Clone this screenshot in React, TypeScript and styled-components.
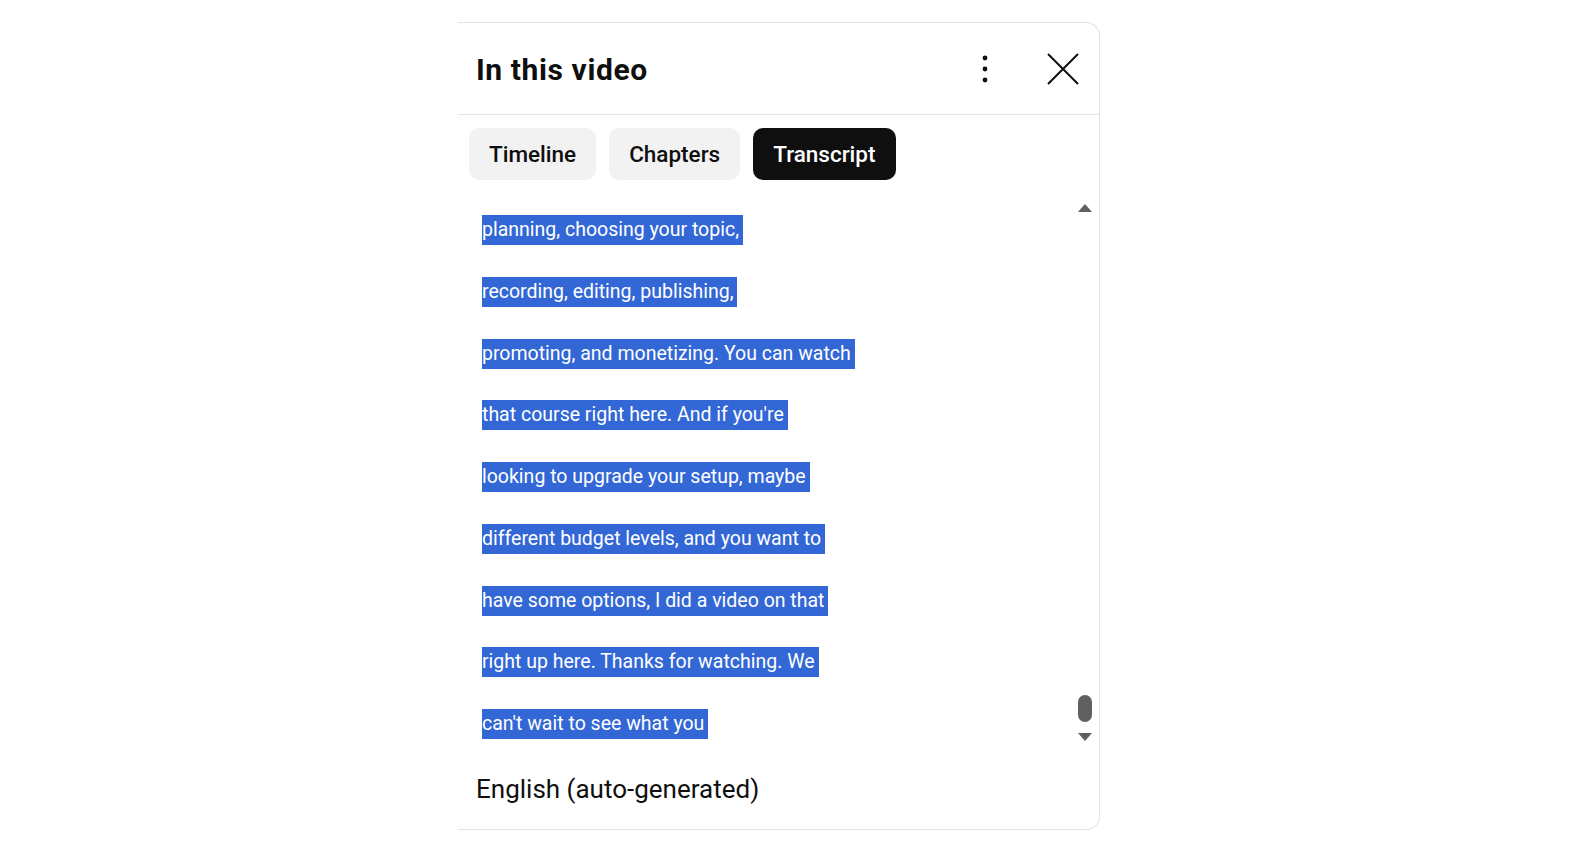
import React from "react";
import styled, { createGlobalStyle } from "styled-components";

const Global = createGlobalStyle`
  html, body { margin: 0; padding: 0; background: #ffffff; }
  body { font-family: Roboto, "Liberation Sans", Arial, sans-serif; color: #0f0f0f; }
`;

const Page = styled.div`
  padding: 22px 0 0 458px;
`;

const Card = styled.div`
  width: 641px;
  height: 806px;
  border: 1px solid #e3e3e3;
  border-left: none;
  border-radius: 0 14px 14px 0;
  display: flex;
  flex-direction: column;
  background: #fff;
  overflow: hidden;
`;

const Header = styled.div`
  height: 91px;
  border-bottom: 1px solid #e5e5e5;
  display: flex;
  align-items: center;
  padding: 0 20px 0 18px;
`;

const Title = styled.h2`
  flex: 1;
  margin: 0;
  font-family: Roboto, "Liberation Sans", sans-serif;
  font-weight: 700;
  font-size: 30px;
  letter-spacing: 0.6px;
  color: #0f0f0f;
  padding-top: 2px;
`;

const IconButton = styled.button<{ $w: number }>`
  border: none;
  background: transparent;
  padding: 0;
  display: flex;
  align-items: center;
  justify-content: center;
  width: ${(p) => p.$w}px;
  height: 40px;
  cursor: pointer;
`;

const Tabs = styled.div`
  display: flex;
  gap: 13px;
  padding: 13px 13px 0 11px;
`;

const Tab = styled.button<{ $active?: boolean }>`
  height: 52px;
  padding: 0 20px;
  border: none;
  border-radius: 10px;
  font-family: Roboto, "Liberation Sans", sans-serif;
  font-size: 22.5px;
  font-weight: 500;
  background: ${(p) => (p.$active ? "#0f0f0f" : "#f2f2f2")};
  color: ${(p) => (p.$active ? "#ffffff" : "#0f0f0f")};
  cursor: pointer;
`;

const Body = styled.div`
  flex: 1;
  display: flex;
  min-height: 0;
`;

const Lines = styled.div`
  flex: 1;
  display: flex;
  flex-direction: column;
  gap: 31.75px;
  padding: 35px 0 0 24px;
`;

const Line = styled.div`
  height: 30px;
  display: flex;
`;

const Highlight = styled.span`
  background: #3367d6;
  color: #ffffff;
  font-family: Roboto, "Liberation Sans", sans-serif;
  font-size: 19.5px;
  line-height: 30px;
  padding-right: 4px;
  white-space: nowrap;
`;

const Scrollbar = styled.div`
  width: 14px;
  margin-right: 7px;
  position: relative;
  height: 560px;
`;

const Thumb = styled.div`
  position: absolute;
  top: 515px;
  left: 0;
  width: 14px;
  height: 27px;
  border-radius: 7px;
  background: #606060;
`;

const Arrow = styled.div<{ $down?: boolean }>`
  position: absolute;
  left: 0;
  top: ${(p) => (p.$down ? "553px" : "24px")};
  width: 0;
  height: 0;
  border-left: 7.5px solid transparent;
  border-right: 7.5px solid transparent;
  ${(p) =>
    p.$down
      ? "border-top: 8px solid #606060;"
      : "border-bottom: 8px solid #606060;"}
`;

const Footer = styled.div`
  height: 80px;
  display: flex;
  align-items: center;
  padding: 0 18px 0 18px;
  font-family: Roboto, "Liberation Sans", sans-serif;
  font-size: 26px;
  color: #0f0f0f;
`;

const lines = [
  "planning, choosing your topic,",
  "recording, editing, publishing,",
  "promoting, and monetizing. You can watch",
  "that course right here. And if you're",
  "looking to upgrade your setup, maybe",
  "different budget levels, and you want to",
  "have some options, I did a video on that",
  "right up here. Thanks for watching. We",
  "can't wait to see what you",
];

export default function App() {
  return (
    <>
      <Global />
      <Page>
        <Card>
          <Header>
            <Title>In this video</Title>
            <IconButton $w={20} style={{ marginRight: 52 }} aria-label="More">
              <svg width="6" height="28" viewBox="0 0 6 28">
                <circle cx="3" cy="3" r="2.4" fill="#0f0f0f" />
                <circle cx="3" cy="14" r="2.4" fill="#0f0f0f" />
                <circle cx="3" cy="25" r="2.4" fill="#0f0f0f" />
              </svg>
            </IconButton>
            <IconButton $w={32} aria-label="Close">
              <svg width="32" height="32" viewBox="0 0 32 32">
                <path d="M1 1 L31 31 M31 1 L1 31" stroke="#0f0f0f" strokeWidth="2" fill="none" />
              </svg>
            </IconButton>
          </Header>
          <Tabs>
            <Tab>Timeline</Tab>
            <Tab>Chapters</Tab>
            <Tab $active>Transcript</Tab>
          </Tabs>
          <Body>
            <Lines>
              {lines.map((l) => (
                <Line key={l}>
                  <Highlight>{l}</Highlight>
                </Line>
              ))}
            </Lines>
            <Scrollbar>
              <Arrow />
              <Thumb />
              <Arrow $down />
            </Scrollbar>
          </Body>
          <Footer>English (auto-generated)</Footer>
        </Card>
      </Page>
    </>
  );
}
